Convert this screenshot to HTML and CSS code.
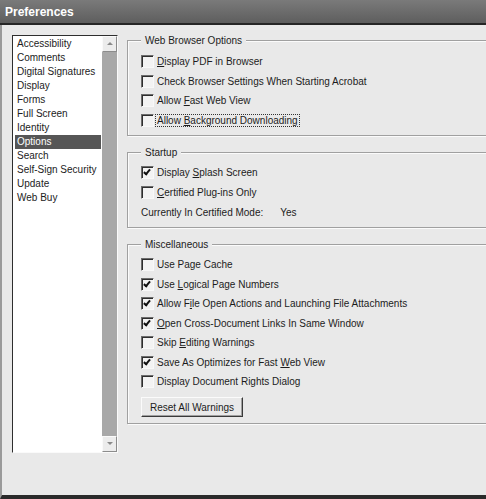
FILE: index.html
```html
<!DOCTYPE html>
<html lang="en">
<head>
    <meta charset="UTF-8">
    <title>Preferences</title>
    <link rel="stylesheet" href="styles.css">
</head>
<body>
    <div class="window">
        <div class="titlebar">Preferences</div>

        <div class="content">
            <!-- Lista de categorias -->
            <div class="listbox">
                <ul class="categories">
                    <li>Accessibility</li>
                    <li>Comments</li>
                    <li>Digital Signatures</li>
                    <li>Display</li>
                    <li>Forms</li>
                    <li>Full Screen</li>
                    <li>Identity</li>
                    <li class="selected">Options</li>
                    <li>Search</li>
                    <li>Self-Sign Security</li>
                    <li>Update</li>
                    <li>Web Buy</li>
                </ul>
                <div class="scrollbar">
                    <div class="arrow up"></div>
                    <div class="track"></div>
                    <div class="arrow down"></div>
                </div>
            </div>

            <!-- Panel de opciones -->
            <div class="panel">
                <fieldset class="group">
                    <legend>Web Browser Options</legend>
                    <div class="option"><span class="box"></span><span class="text"><u>D</u>isplay PDF in Browser</span></div>
                    <div class="option"><span class="box"></span><span class="text">Check Browser Settings When Starting Acrobat</span></div>
                    <div class="option"><span class="box"></span><span class="text">Allow <u>F</u>ast Web View</span></div>
                    <div class="option"><span class="box"></span><span class="text focused">Allow <u>B</u>ackground Downloading</span></div>
                </fieldset>

                <fieldset class="group startup">
                    <legend>Startup</legend>
                    <div class="option"><span class="box checked"></span><span class="text">Display <u>S</u>plash Screen</span></div>
                    <div class="option"><span class="box"></span><span class="text"><u>C</u>ertified Plug-ins Only</span></div>
                    <div class="info-row">
                        <span class="info-label">Currently In Certified Mode:</span>
                        <span class="info-value">Yes</span>
                    </div>
                </fieldset>

                <fieldset class="group misc">
                    <legend>Miscellaneous</legend>
                    <div class="option"><span class="box"></span><span class="text">Use Page Cache</span></div>
                    <div class="option"><span class="box checked"></span><span class="text">Use <u>L</u>ogical Page Numbers</span></div>
                    <div class="option"><span class="box checked"></span><span class="text">Allow F<u>i</u>le Open Actions and Launching File Attachments</span></div>
                    <div class="option"><span class="box checked"></span><span class="text"><u>O</u>pen Cross-Document Links In Same Window</span></div>
                    <div class="option"><span class="box"></span><span class="text">Skip <u>E</u>diting Warnings</span></div>
                    <div class="option"><span class="box checked"></span><span class="text">Save As Optimizes for Fast <u>W</u>eb View</span></div>
                    <div class="option"><span class="box"></span><span class="text">Display Document Rights Dialog</span></div>
                    <button class="btn">Reset All Warnings</button>
                </fieldset>
            </div>
        </div>
    </div>
</body>
</html>
```

FILE: styles.css
```css
/* Estilos generales */
body {
    margin: 0;
    overflow: hidden;
    font-family: "Liberation Sans", Arial, sans-serif;
    font-size: 10px;
    color: #1c1c1c;
    background-color: #e9e9e9;
}

.window {
    width: 486px;
    height: 499px;
    overflow: hidden;
}

/* Barra de titulo */
.titlebar {
    height: 23px;
    line-height: 24px;
    padding-left: 5px;
    background: linear-gradient(#7a7a7a, #5e5e5e);
    border-bottom: 2px solid #262626;
    color: white;
    font-size: 12px;
    font-weight: bold;
}

/* Contenido */
.content {
    display: flex;
    align-items: flex-start;
    height: 460px;
    padding: 10px 0 0 10px;
    border-left: 2px solid #9a9a9a;
    border-bottom: 4px solid #2a2a2a;
    background-color: #e9e9e9;
}

/* Lista */
.listbox {
    display: flex;
    flex-shrink: 0;
    width: 104px;
    height: 416px;
    border-top: 1px solid #2e2e2e;
    border-left: 1px solid #2e2e2e;
    border-right: 1px solid #fafafa;
    border-bottom: 1px solid #fafafa;
}

.categories {
    flex: 1;
    margin: 0;
    padding: 1px 0 0 0;
    list-style: none;
    background: white;
}

.categories li {
    height: 14px;
    line-height: 14px;
    margin: 0 1px 0 2px;
    padding-left: 2px;
    white-space: nowrap;
}

.categories li.selected {
    background-color: #565656;
    color: white;
}

.scrollbar {
    display: flex;
    flex-direction: column;
    width: 15px;
}

.track {
    flex: 1;
    background-color: #a8a8a8;
}

.arrow {
    position: relative;
    height: 14px;
    background-color: #ececec;
    border: 1px solid;
    border-color: #fafafa #8c8c8c #8c8c8c #fafafa;
}

.arrow::after {
    content: "";
    position: absolute;
    left: 4px;
    top: 5px;
    border-left: 3px solid transparent;
    border-right: 3px solid transparent;
}

.arrow.up::after {
    border-bottom: 3px solid #8a8a8a;
}

.arrow.down::after {
    border-top: 3px solid #8a8a8a;
}

/* Panel de opciones */
.panel {
    flex-shrink: 0;
    width: 400px;
    margin-left: 9px;
}

.group {
    margin: 0;
    padding: 6px 0 5px 13px;
    border: 1px solid #a0a0a0;
    box-shadow: 1px 1px 0 #fbfbfb, inset 1px 1px 0 #fbfbfb;
}

.group.startup {
    margin-top: 11px;
    padding-top: 5px;
    padding-bottom: 4px;
}

.group.misc {
    margin-top: 11px;
    padding-top: 5px;
    padding-bottom: 6px;
}

legend {
    padding: 0 4px;
    line-height: 11px;
    background-color: #e9e9e9;
}

.option {
    display: flex;
    align-items: center;
    height: 19.5px;
}

.box {
    position: relative;
    width: 11px;
    height: 11px;
    border: 1px solid;
    border-color: #6c6c6c #f8f8f8 #f8f8f8 #6c6c6c;
    background-color: #f3f3f3;
    box-shadow: inset 1px 1px 0 #2e2e2e;
}

.box.checked::after {
    content: "";
    position: absolute;
    left: 3px;
    top: 1px;
    width: 2px;
    height: 5px;
    border-right: 2px solid #111;
    border-bottom: 2px solid #111;
    transform: rotate(40deg);
}

.text {
    margin-left: 1px;
    padding: 0 1px;
    border: 1px solid transparent;
    white-space: nowrap;
}

.text.focused {
    border: 1px dotted #333;
}

.info-row {
    display: flex;
    align-items: center;
    height: 21px;
}

.info-value {
    margin-left: 17px;
}

/* Boton */
.btn {
    display: block;
    width: 102px;
    height: 20px;
    margin-top: 5.5px;
    padding: 0;
    font-family: inherit;
    font-size: 10px;
    color: #1c1c1c;
    background-color: #e9e9e9;
    border: 1px solid;
    border-color: #fbfbfb #3a3a3a #3a3a3a #fbfbfb;
    box-shadow: inset -1px -1px 0 #a0a0a0;
}
```
